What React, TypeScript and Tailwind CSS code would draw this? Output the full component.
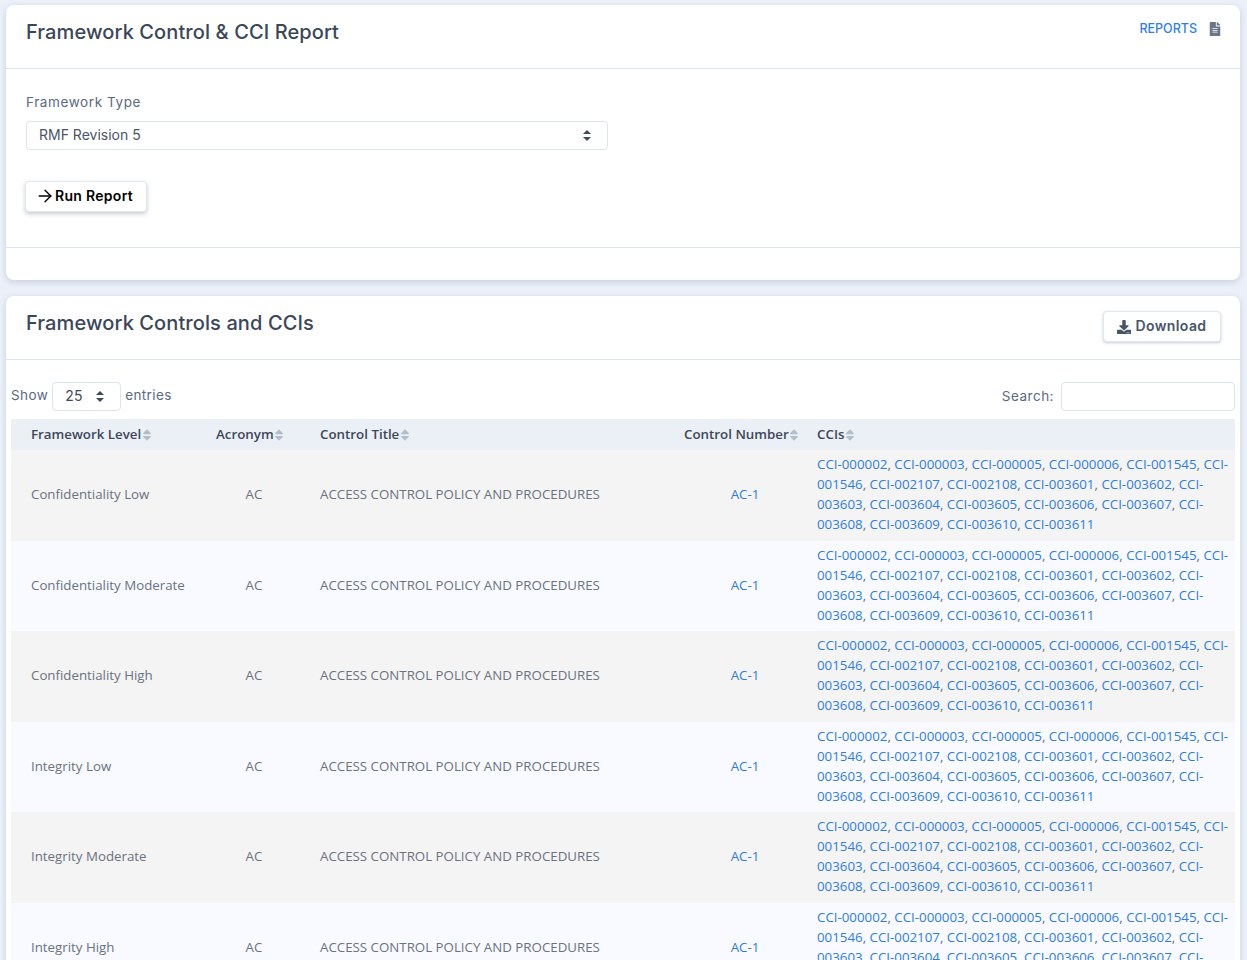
import React from 'react';
import { FaDownload, FaFileAlt, FaSort } from 'react-icons/fa';
import { ArrowRight } from 'lucide-react';

const ccis = [
  '000002', '000003', '000005', '000006', '001545', '001546', '002107', '002108', '003601',
  '003602', '003603', '003604', '003605', '003606', '003607', '003608', '003609', '003610', '003611',
];

const levels = [
  'Confidentiality Low',
  'Confidentiality Moderate',
  'Confidentiality High',
  'Integrity Low',
  'Integrity Moderate',
  'Integrity High',
];

const SelectCaret = () => (
  <svg width="8" height="11" viewBox="0 0 8 11" className="fill-[#3f4a5a]">
    <path d="M4 0 L8 4 H0 Z" />
    <path d="M4 11 L0 7 H8 Z" />
  </svg>
);

const HeaderCell = ({ label }: { label: string }) => (
  <th className="h-[31.3px] pl-5 pr-0 text-left text-[13.33px] font-semibold text-[#3d4757]">
    <span className="inline-flex items-center whitespace-nowrap">
      {label}
      <FaSort className="ml-[-1.5px] text-[14px] text-[#b4bdca]" />
    </span>
  </th>
);

const App: React.FC = () => {
  return (
    <div className="h-screen overflow-hidden bg-[#ebf0f9] pl-[6px] pr-[7px] pt-[5px] font-['Inter',sans-serif]">
      <section className="h-[275px] rounded-lg bg-white shadow-[0_2px_6px_rgba(100,116,139,0.25)]">
        <header className="flex h-[64px] justify-between border-b border-[#dbe4ef] pl-5 pr-[18px]">
          <h1 className="pt-[14px] text-[20px] leading-[27px] font-medium tracking-[0.1px] text-[#3a4759]">
            Framework Control &amp; CCI Report
          </h1>
          <a className="flex h-fit items-center gap-[11px] pt-[15px] text-[12.5px] leading-[18px] font-medium text-[#2f80ed]">
            REPORTS
            <FaFileAlt className="text-[14px] text-[#6b7789]" />
          </a>
        </header>
        <div className="h-[179px] border-b border-[#dbe4ef] pl-5 pt-[23px]">
          <label className="block text-[13.5px] leading-5 tracking-[0.6px] text-[#5a6a80]">Framework Type</label>
          <div className="mt-[9px] flex h-[29px] w-[582px] items-center justify-between rounded border border-[#dbe4ef] pl-3 pr-4 text-[14px] text-[#4a5568]">
            <span className="pb-[2px]">RMF Revision 5</span>
            <SelectCaret />
          </div>
          <button className="mt-[31px] -ml-px flex h-[31px] w-[122px] items-center justify-start rounded border border-[#e2e8f0] bg-white pl-[9px] pb-[2px] text-[14px] font-semibold tracking-[0.3px] text-black shadow-[0_2px_4px_rgba(71,85,105,0.3)]">
            <ArrowRight size={20} strokeWidth={1.6} className="mt-[1px]" />
            Run Report
          </button>
        </div>
      </section>

      <section className="mt-4 rounded-lg bg-white shadow-[0_2px_6px_rgba(100,116,139,0.25)]">
        <header className="flex h-[64px] items-start justify-between border-b border-[#dbe4ef] pl-5 pr-[19px]">
          <h2 className="pt-[14px] text-[20px] leading-[27px] font-medium tracking-[0.1px] text-[#3a4759]">Framework Controls and CCIs</h2>
          <button className="mt-[15px] flex h-[31px] w-[118px] items-center justify-center gap-1 rounded border border-[#e2e8f0] bg-white pb-[2px] text-[14px] font-semibold tracking-[0.4px] text-[#475569] shadow-[0_1px_3px_rgba(71,85,105,0.3)]">
            <FaDownload className="mt-[2px] text-[14px]" />
            Download
          </button>
        </header>

        <div className="flex items-center justify-between pl-[5px] pr-[5px] pt-[22px] text-[13.5px] tracking-[0.4px] text-[#5a6a80]">
          <div className="flex items-center gap-1">
            <span className="pb-[2px]">Show</span>
            <div className="flex h-[29px] w-[69px] items-center justify-between rounded border border-[#dbe4ef] pl-3 pr-4 text-[14px] text-[#3f4a5a]">
              <span className="pb-[2px]">25</span>
              <SelectCaret />
            </div>
            <span className="pb-[2px]">entries</span>
          </div>
          <div className="flex items-center gap-[7px]">
            <span className="pb-[1px] tracking-[0.5px]">Search:</span>
            <div className="h-[29px] w-[174px] rounded border border-[#dbe4ef]" />
          </div>
        </div>

        <table className="mx-[5px] mt-[8px] w-[1224px] table-fixed border-collapse font-['Open_Sans',sans-serif]">
          <colgroup>
            <col className="w-[185px]" />
            <col className="w-[104px]" />
            <col className="w-[364px]" />
            <col className="w-[133px]" />
            <col className="w-[438px]" />
          </colgroup>
          <thead className="bg-[#ebf0f7]">
            <tr>
              <HeaderCell label="Framework Level" />
              <HeaderCell label="Acronym" />
              <HeaderCell label="Control Title" />
              <HeaderCell label="Control Number" />
              <HeaderCell label="CCIs" />
            </tr>
          </thead>
          <tbody className="text-[13.3px] leading-5 text-[#6b7280]">
            {levels.map((level, i) => (
              <tr key={level} className={i % 2 === 0 ? 'bg-[#f4f4f4]' : 'bg-[#f8faff]'}>
                <td className="pb-[3px] pl-5">{level}</td>
                <td className="pb-[3px] pl-5 pr-2 text-center">AC</td>
                <td className="pb-[3px] pl-5 whitespace-nowrap">ACCESS CONTROL POLICY AND PROCEDURES</td>
                <td className="pb-[3px] pl-[29px] text-center text-[#2f7de1]">AC-1</td>
                <td className="pl-5 pr-[5px] pt-[4px] pb-[6.5px]">
                  {ccis.map((cci, j) => (
                    <React.Fragment key={cci}>
                      <a className="text-[#2f7de1]">CCI-{cci}</a>
                      {j < ccis.length - 1 ? ', ' : ''}
                    </React.Fragment>
                  ))}
                </td>
              </tr>
            ))}
          </tbody>
        </table>
      </section>
    </div>
  );
};

export default App;
